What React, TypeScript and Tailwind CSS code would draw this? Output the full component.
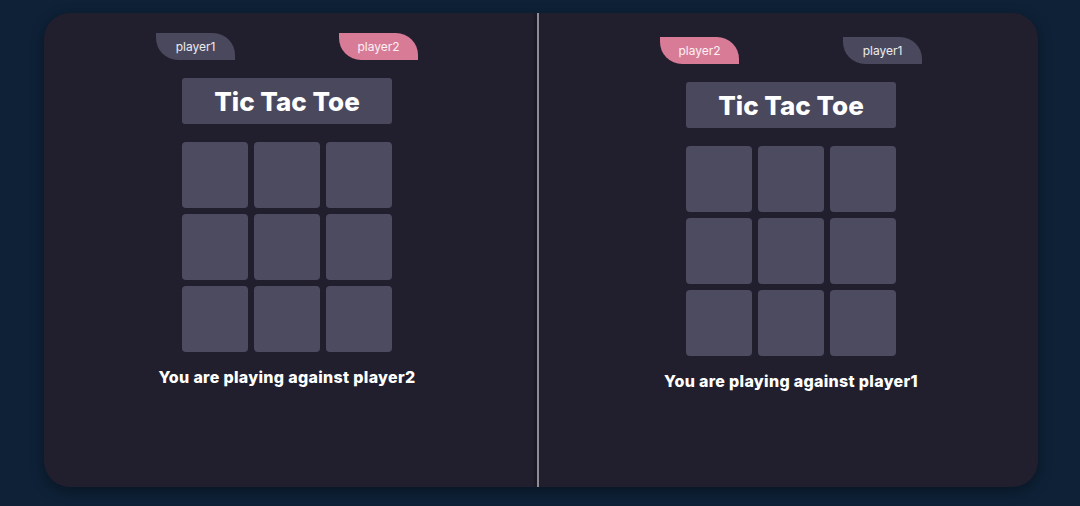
import React from "react";

const font = { fontFamily: "Inter, 'Noto Sans', sans-serif" };

function Tag({ label, pink }: { label: string; pink?: boolean }) {
  return (
    <div
      className={`flex h-[27px] w-[79px] items-center justify-center rounded-tr-[22px] rounded-bl-[22px] text-[12px] text-white/90 ${
        pink ? "bg-[#d77b96]" : "bg-[#4a485c]"
      }`}
    >
      {label}
    </div>
  );
}

function Board({ opponent, pinkFirst, className }: { opponent: string; pinkFirst?: boolean; className: string }) {
  return (
    <div className={`flex flex-col items-center ${className}`}>
      <div className="flex w-[262px] justify-between">
        {pinkFirst ? (
          <>
            <Tag label="player2" pink />
            <Tag label="player1" />
          </>
        ) : (
          <>
            <Tag label="player1" />
            <Tag label="player2" pink />
          </>
        )}
      </div>
      <div className="mt-[18px] flex h-[46px] w-[210px] items-center justify-center rounded-[3px] bg-[#4a485c] text-[26px] font-extrabold text-white">
        Tic Tac Toe
      </div>
      <div className="mt-[18px] grid grid-cols-3 gap-[6px]">
        {Array.from({ length: 9 }).map((_, i) => (
          <div key={i} className="h-[66px] w-[66px] rounded-[4px] bg-[#4c4b60]" />
        ))}
      </div>
      <div className="mt-[13px] text-[16px] font-extrabold tracking-[0.02em] text-white">
        You are playing against {opponent}
      </div>
    </div>
  );
}

export default function App() {
  return (
    <div className="flex h-[506px] w-[1080px] bg-[#0e2137] pl-[44px] pt-[13px]" style={font}>
      <div className="flex h-[474px] w-[994px] overflow-hidden rounded-[26px] bg-[#211f2e] shadow-[0_4px_14px_rgba(0,0,0,0.35)]">
        <Board opponent="player2" className="w-[493px] pt-5 pr-[7px]" />
        <div className="w-[2px] bg-[#8e8d95] shadow-[-2px_0_3px_rgba(0,0,0,0.4)]" />
        <Board opponent="player1" pinkFirst className="flex-1 pt-6 pl-[5px]" />
      </div>
    </div>
  );
}
